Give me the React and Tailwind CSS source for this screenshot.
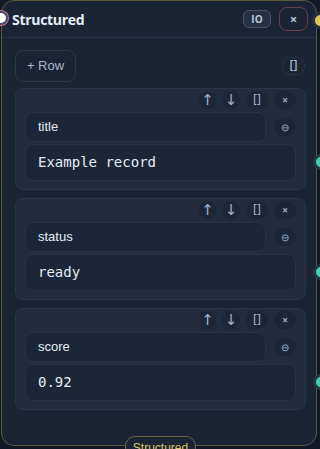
import { useState } from "react";

const initialRows = [
  { key: "title", value: "Example record" },
  { key: "status", value: "ready" },
  { key: "score", value: "0.92" }
];

const SmallBtn = ({ children, className = "" }) => (
  <button
    className={`h-[18px] flex items-center justify-center rounded-full bg-[#1b2638] text-[#9fb0c8] leading-none ${className}`}
  >
    {children}
  </button>
);

const Row = ({ row }) => (
  <div className="relative">
    <div className="h-[102px] rounded-lg bg-[#212d3f] border border-[#28364a] px-[9px] pt-[2px] pb-2 flex flex-col">
      <div className="flex justify-end gap-[6px]">
        <SmallBtn className="w-[17px] text-[15px] font-['DejaVu_Sans',sans-serif]">↑</SmallBtn>
        <SmallBtn className="w-[18px] text-[15px] font-['DejaVu_Sans',sans-serif]">↓</SmallBtn>
        <SmallBtn className="w-[22px] text-[12px] tracking-[-3px] pr-[3px] font-['DejaVu_Sans_Mono',monospace]">[]</SmallBtn>
        <SmallBtn className="w-[22px] text-[10px] font-bold">×</SmallBtn>
      </div>
      <div className="flex items-center gap-2 mt-[3px]">
        <div className="flex-1 h-[30px] rounded-lg bg-[#1b2638] border border-[#26344a] px-3 flex items-center text-[13px] text-[#e6edf5] font-['Liberation_Sans',sans-serif]">
          {row.key}
        </div>
        <SmallBtn className="w-[22px] text-[10px]">⊖</SmallBtn>
      </div>
      <div className="mt-[2px] h-[37px] rounded-lg bg-[#1b2638] border border-[#26344a] px-3 flex items-center text-[14px] text-[#e6edf5] font-['DejaVu_Sans_Mono',monospace]">
        {row.value}
      </div>
    </div>
    <div className="absolute right-[-23px] top-[66px] w-[16px] h-[16px] rounded-full bg-[#3fd0b6] border-[3px] border-[#1e3c44]" />
  </div>
);

export default function App() {
  const [rows] = useState(initialRows);

  return (
    <div className="w-[320px] h-[449px] bg-[#111927] overflow-hidden font-['Open_Sans',sans-serif]">
      <div className="relative ml-[1px] w-[316px] h-[446px] rounded-[13px] border border-[#5b583b] bg-[#1a2435]">
        {/* handles */}
        <div className="absolute left-[-8px] top-[10px] w-[14px] h-[14px] rounded-full bg-white border-2 border-[#3a4d6a] shadow-[0_0_0_1px_#d06a9a]" />
        <div className="absolute right-[-13px] top-[11px] w-[17px] h-[17px] rounded-full bg-[#e6c54c] border-[3px] border-[#2a3242]" />

        {/* header */}
        <div className="h-[37px] border-b border-[#26334a] flex items-center pl-[10px] pr-[8px]">
          <span className="text-[14px] font-bold text-[#e8eef6] tracking-[-0.3px]">Structured</span>
          <div className="ml-auto flex items-center gap-2">
            <button className="w-[28px] h-[18px] rounded-md border border-[#465468] bg-[#243043] text-[10px] font-bold text-[#b9c6d8] leading-none">
              IO
            </button>
            <button className="w-[29px] h-[24px] rounded-lg border border-[#6a3e4a] text-[13px] font-bold text-[#b9c6d8] leading-none">
              ×
            </button>
          </div>
        </div>

        {/* toolbar */}
        <div className="flex items-center justify-between pl-[13px] pr-[11px] pt-[12px]">
          <button className="w-[61px] h-[32px] rounded-lg border border-[#2a384c] text-[13px] text-[#a9b8cc] font-['Liberation_Sans',sans-serif]">
            + Row
          </button>
          <button className="w-[23px] h-[18px] rounded-lg border border-[#263448] text-[12px] tracking-[-3px] pr-[3px] text-[#b9c6d8] leading-none font-['DejaVu_Sans_Mono',monospace]">
            []
          </button>
        </div>

        {/* rows */}
        <div className="flex flex-col gap-2 pl-[13px] pr-[10px] mt-[6px]">
          {rows.map((row) => (
            <Row key={row.key} row={row} />
          ))}
        </div>

        {/* footer label */}
        <div className="absolute left-[123px] top-[435px] w-[71px] h-[22px] rounded-[10px] border border-[#6b6540] bg-[#1a2435] text-[12px] text-[#d9c464] text-center leading-[22px] font-['Liberation_Sans',sans-serif]">
          Structured
        </div>
      </div>
    </div>
  );
}
